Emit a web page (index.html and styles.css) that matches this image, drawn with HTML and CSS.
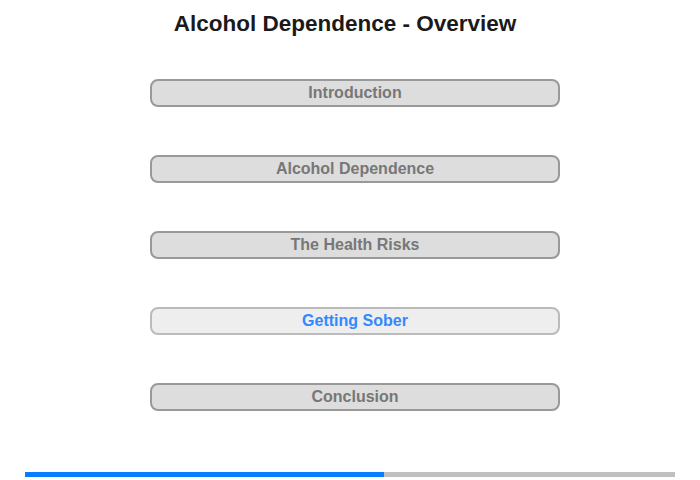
FILE: index.html
```html
<!DOCTYPE html>
<html lang="en">
<head>
  <meta charset="UTF-8" />
  <meta name="viewport" content="width=device-width, initial-scale=1.0"/>
  <title>Alcohol Dependence - Overview</title>
  <link rel="stylesheet" href="styles.css">
</head>
<body>
  <h1 class="title">Alcohol Dependence - Overview</h1>

  <!-- Chapter menu -->
  <div class="menu">
    <a class="chapter">Introduction</a>
    <a class="chapter">Alcohol Dependence</a>
    <a class="chapter">The Health Risks</a>
    <a class="chapter current">Getting Sober</a>
    <a class="chapter">Conclusion</a>
  </div>

  <!-- Progress -->
  <div class="progress"><div class="progress-fill" style="width: 55.3%"></div></div>
</body>
</html>
```

FILE: styles.css
```css
body { font-family: "Liberation Sans", Arial, sans-serif; margin: 0; padding: 0; background: #fff; width: 700px; height: 480px; overflow: hidden; }
.title { font-size: 22.5px; font-weight: bold; color: #1a1a1a; margin: 0; padding: 11px 10px 0 0; height: 68px; box-sizing: border-box; text-align: center; line-height: 25px; }
.menu { display: flex; flex-direction: column; gap: 48px; margin-left: 150px; width: 410px; margin-top: 11px; }
.chapter { display: block; height: 28px; box-sizing: border-box; border: 2px solid #999; border-radius: 8px; background: #ddd; color: #777; font-size: 16px; font-weight: bold; text-align: center; line-height: 24px; cursor: pointer; }
.chapter.current { background: #eee; border-color: #bbb; color: #3388ff; }
.progress { margin: 61px 25px 0; height: 5px; background: #c0c0c0; }
.progress-fill { height: 100%; background: #0a7cff; }
```
